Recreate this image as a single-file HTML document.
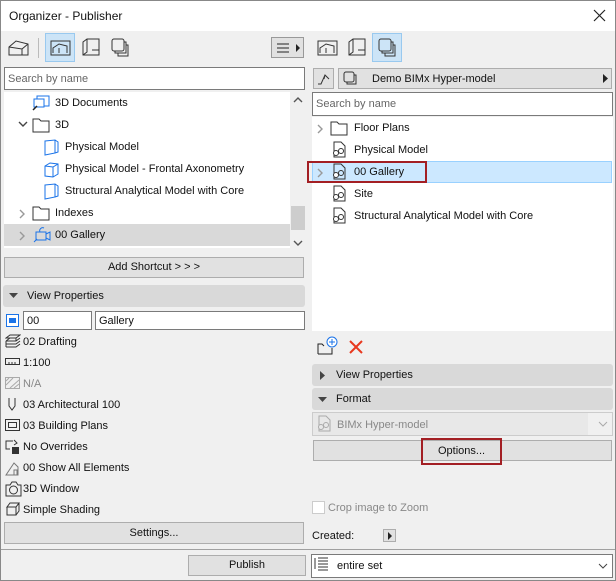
<!DOCTYPE html>
<html><head><style>
*{box-sizing:border-box;margin:0;padding:0}
body{width:616px;height:581px;background:#f0f0f0;font-family:"Liberation Sans",sans-serif;font-size:11px;color:#111;position:relative;overflow:hidden}
.a{position:absolute}
.win{left:0;top:0;width:616px;height:581px;border:1px solid #888}
.btn{position:absolute;background:#e1e1e1;border:1px solid #adadad;text-align:center;font-size:11px}
.inp{position:absolute;background:#fff;border:1px solid #7a7a7a}
.hdr{position:absolute;background:#d9d9d9;border-radius:3px;font-size:11px}
.t{position:absolute;white-space:nowrap}
.g{color:#888}
</style></head><body>
<div class="a win"></div>
<div class="a" style="left:1px;top:1px;width:614px;height:30px;background:#fff"></div>
<div class="t" style="left:9px;top:9px;font-size:12px">Organizer - Publisher</div>
<svg class="a" style="left:593px;top:9px" width="13" height="13"><path d="M1 1L12 12M12 1L1 12" stroke="#222" stroke-width="1.2"/></svg>

<!-- left toolbar -->
<svg class="a" style="left:8px;top:39px" width="22" height="18"><path d="M1 16V8L8 2L20 5V16ZM1 8L14 10L20 5M14 10V16" fill="none" stroke="#333"/></svg>
<div class="a" style="left:38px;top:38px;width:1px;height:20px;background:#bbb"></div>
<div class="a" style="left:45px;top:33px;width:30px;height:29px;background:#cce4f7;border:1px solid #99c9ef"></div>
<svg class="a" style="left:50px;top:39px" width="22" height="18"><rect x="1" y="2" width="19" height="14" fill="none" stroke="#333"/><path d="M3 14V9L9 5L17 7V14M9 14V9" fill="none" stroke="#333"/></svg>
<svg class="a" style="left:80px;top:38px" width="22" height="20"><path d="M3 17V4L7 1H19V17ZM3 17L7 14V1M12 12H19" fill="none" stroke="#333"/></svg>
<svg class="a" style="left:110px;top:38px" width="22" height="20"><rect x="2" y="1" width="12" height="12" rx="2" fill="none" stroke="#333"/><path d="M14 4H16V15H5V13M16 7H18V18H8V15" fill="none" stroke="#333"/></svg>
<div class="btn" style="left:271px;top:37px;width:33px;height:21px;background:#e1e1e1;border-color:#999"></div>
<svg class="a" style="left:276px;top:41px" width="26" height="14"><path d="M1 3H13M1 7H13M1 11H13" stroke="#222"/><path d="M20 3L24 7L20 11Z" fill="#222"/></svg>

<div class="inp" style="left:4px;top:67px;width:301px;height:23px"></div>
<div class="t g" style="left:8px;top:73px;color:#666">Search by name</div>

<div class="a" style="left:4px;top:92px;width:286px;height:156px;background:#fff"></div>
<div class="a" style="left:290px;top:92px;width:15px;height:156px;background:#f0f0f0"></div>
<div class="a" style="left:291px;top:206px;width:14px;height:24px;background:#cdcdcd"></div>
<svg class="a" style="left:293px;top:96px" width="10" height="8"><path d="M1 6L5 2L9 6" fill="none" stroke="#555" stroke-width="1.4"/></svg>
<svg class="a" style="left:293px;top:239px" width="10" height="8"><path d="M1 2L5 6L9 2" fill="none" stroke="#555" stroke-width="1.4"/></svg>
<div class="a" style="left:4px;top:224px;width:286px;height:22px;background:#d9d9d9"></div>

<svg class="a" style="left:31px;top:94px" width="20" height="18"><rect x="6" y="2" width="12" height="10" fill="none" stroke="#1a73e8"/><rect x="3" y="5" width="10" height="8" fill="#fff" stroke="#1a73e8"/><path d="M2 16L6 12" stroke="#222" stroke-width="1.5"/></svg>
<div class="t" style="left:55px;top:97px">3D Documents</div>
<svg class="a" style="left:18px;top:120px" width="10" height="8"><path d="M1 2L5 6L9 2" fill="none" stroke="#444" stroke-width="1.4"/></svg>
<svg class="a" style="left:32px;top:118px" width="18" height="15"><path d="M1 14V1H7L9 3H17V14Z" fill="none" stroke="#333"/></svg>
<div class="t" style="left:55px;top:119px">3D</div>
<svg class="a" style="left:43px;top:139px" width="17" height="17"><path d="M2 2L12 1V14L2 16ZM12 1L15 3V13L12 14" fill="none" stroke="#1a73e8"/></svg>
<div class="t" style="left:65px;top:141px">Physical Model</div>
<svg class="a" style="left:43px;top:161px" width="17" height="17"><path d="M2 5L7 2L15 3V13L10 16L2 15ZM2 5L10 6L15 3M10 6V16" fill="none" stroke="#1a73e8"/></svg>
<div class="t" style="left:65px;top:163px">Physical Model - Frontal Axonometry</div>
<svg class="a" style="left:43px;top:183px" width="17" height="17"><path d="M2 2L12 1V14L2 16ZM12 1L15 3V13L12 14" fill="none" stroke="#1a73e8"/></svg>
<div class="t" style="left:65px;top:185px">Structural Analytical Model with Core</div>
<svg class="a" style="left:18px;top:209px" width="8" height="10"><path d="M2 1L6 5L2 9" fill="none" stroke="#999" stroke-width="1.4"/></svg>
<svg class="a" style="left:32px;top:206px" width="18" height="15"><path d="M1 14V1H7L9 3H17V14Z" fill="none" stroke="#333"/></svg>
<div class="t" style="left:55px;top:207px">Indexes</div>
<svg class="a" style="left:18px;top:231px" width="8" height="10"><path d="M2 1L6 5L2 9" fill="none" stroke="#999" stroke-width="1.4"/></svg>
<svg class="a" style="left:32px;top:226px" width="20" height="18"><rect x="4" y="6" width="10" height="8" fill="none" stroke="#1a73e8"/><path d="M14 8L18 6V14L14 12M8 6A3 3 0 0 1 12 2" fill="none" stroke="#1a73e8"/><path d="M2 16L5 13" stroke="#1a73e8"/></svg>
<div class="t" style="left:55px;top:229px">00 Gallery</div>

<div class="btn" style="left:4px;top:257px;width:300px;height:21px;line-height:19px">Add Shortcut &gt; &gt; &gt;</div>
<div class="hdr" style="left:3px;top:285px;width:302px;height:22px"></div>
<svg class="a" style="left:9px;top:293px" width="9" height="6"><path d="M0 0H9L4.5 5Z" fill="#444"/></svg>
<div class="t" style="left:27px;top:290px">View Properties</div>

<svg class="a" style="left:6px;top:314px" width="13" height="13"><rect x="0.5" y="0.5" width="12" height="12" fill="#fff" stroke="#1a73e8"/><rect x="3" y="4" width="7" height="5" fill="#1a73e8"/></svg>
<div class="inp" style="left:23px;top:311px;width:69px;height:19px"></div>
<div class="t" style="left:27px;top:315px">00</div>
<div class="inp" style="left:95px;top:311px;width:210px;height:19px"></div>
<div class="t" style="left:99px;top:315px">Gallery</div>

<svg class="a" style="left:5px;top:334px" width="16" height="14"><path d="M1 4L5 1H15L11 4ZM1 7L5 4M11 4V7M1 7H11L15 4M1 10H11L15 7M1 13H11L15 10M1 7V13" fill="none" stroke="#333"/></svg>
<div class="t" style="left:23px;top:336px">02 Drafting</div>
<svg class="a" style="left:5px;top:357px" width="16" height="10"><rect x="0.5" y="1.5" width="14" height="6" fill="none" stroke="#333"/><path d="M4 5V7M7 5V7M10 5V7" stroke="#333"/></svg>
<div class="t" style="left:23px;top:357px">1:100</div>
<svg class="a" style="left:5px;top:377px" width="16" height="13"><rect x="0.5" y="0.5" width="14" height="11" fill="none" stroke="#aaa"/><path d="M1 8L8 1M5 11L14 3M9 11L14 7M1 4L4 1" stroke="#aaa"/></svg>
<div class="t g" style="left:23px;top:378px">N/A</div>
<svg class="a" style="left:7px;top:397px" width="10" height="15"><path d="M2 1V9L5 13L8 9V1" fill="none" stroke="#333"/></svg>
<div class="t" style="left:23px;top:399px">03 Architectural 100</div>
<svg class="a" style="left:5px;top:419px" width="16" height="13"><rect x="0.5" y="0.5" width="14" height="11" fill="none" stroke="#333"/><rect x="3.5" y="3.5" width="8" height="5" fill="none" stroke="#333"/></svg>
<div class="t" style="left:23px;top:420px">03 Building Plans</div>
<svg class="a" style="left:5px;top:439px" width="16" height="16"><path d="M8 2H1V10H5" fill="none" stroke="#333"/><path d="M9 1L12 4L9 6" fill="none" stroke="#333"/><rect x="7" y="8" width="7" height="7" fill="#333"/></svg>
<div class="t" style="left:23px;top:441px">No Overrides</div>
<svg class="a" style="left:5px;top:460px" width="18" height="16"><path d="M1 15L9 3L13 7V15ZM9 10H12V15H9Z" fill="none" stroke="#777"/></svg>
<div class="t" style="left:23px;top:462px">00 Show All Elements</div>
<svg class="a" style="left:5px;top:481px" width="17" height="16"><path d="M1 4H5L7 1H11L13 4H16V15H1Z" fill="none" stroke="#333"/><circle cx="8.5" cy="9" r="4" fill="none" stroke="#333"/></svg>
<div class="t" style="left:23px;top:483px">3D Window</div>
<svg class="a" style="left:6px;top:502px" width="15" height="15"><path d="M1 5L4 1H13L10 5ZM1 5V13H10V5M10 13L13 9V1" fill="none" stroke="#333"/></svg>
<div class="t" style="left:23px;top:504px">Simple Shading</div>

<div class="btn" style="left:4px;top:522px;width:300px;height:22px;line-height:20px">Settings...</div>
<div class="a" style="left:1px;top:549px;width:614px;height:1px;background:#a0a0a0"></div>
<div class="btn" style="left:188px;top:555px;width:118px;height:21px;line-height:19px">Publish</div>

<!-- right toolbar -->
<svg class="a" style="left:317px;top:39px" width="22" height="18"><rect x="1" y="2" width="19" height="14" fill="none" stroke="#333"/><path d="M3 14V9L9 5L17 7V14M9 14V9" fill="none" stroke="#333"/></svg>
<svg class="a" style="left:346px;top:38px" width="22" height="20"><path d="M3 17V4L7 1H19V17ZM3 17L7 14V1M12 12H19" fill="none" stroke="#333"/></svg>
<div class="a" style="left:372px;top:33px;width:30px;height:29px;background:#cce4f7;border:1px solid #99c9ef"></div>
<svg class="a" style="left:377px;top:38px" width="22" height="20"><rect x="2" y="1" width="12" height="12" rx="2" fill="none" stroke="#333"/><path d="M14 4H16V15H5V13M16 7H18V18H8V15" fill="none" stroke="#333"/></svg>

<div class="btn" style="left:313px;top:68px;width:21px;height:21px"></div>
<svg class="a" style="left:316px;top:71px" width="16" height="15"><path d="M2 13H5L9 4L13 8M9 4L8 8" fill="none" stroke="#333"/></svg>
<div class="btn" style="left:338px;top:68px;width:274px;height:21px"></div>
<svg class="a" style="left:343px;top:71px" width="16" height="16"><rect x="1" y="1" width="10" height="10" rx="2" fill="none" stroke="#333"/><path d="M11 4H13V13H4V11" fill="none" stroke="#333"/></svg>
<div class="t" style="left:372px;top:73px">Demo BIMx Hyper-model</div>
<svg class="a" style="left:603px;top:74px" width="6" height="9"><path d="M0 0L5 4.5L0 9Z" fill="#222"/></svg>

<div class="inp" style="left:312px;top:92px;width:301px;height:24px"></div>
<div class="t" style="left:316px;top:98px;color:#666">Search by name</div>
<div class="a" style="left:312px;top:117px;width:301px;height:214px;background:#fff"></div>
<div class="a" style="left:312px;top:161px;width:300px;height:22px;background:#cce8ff;border:1px solid #99d1ff"></div>

<svg class="a" style="left:316px;top:124px" width="8" height="10"><path d="M2 1L6 5L2 9" fill="none" stroke="#999" stroke-width="1.4"/></svg>
<svg class="a" style="left:330px;top:121px" width="18" height="15"><path d="M1 14V1H7L9 3H17V14Z" fill="none" stroke="#333"/></svg>
<div class="t" style="left:354px;top:122px">Floor Plans</div>
<svg class="a" style="left:331px;top:141px" width="16" height="18"><path d="M3 1H10L14 5V16H3Z" fill="none" stroke="#333"/><circle cx="5" cy="12" r="2.5" fill="#fff" stroke="#333"/><circle cx="10" cy="10" r="2.5" fill="none" stroke="#333"/></svg>
<div class="t" style="left:354px;top:144px">Physical Model</div>
<svg class="a" style="left:316px;top:168px" width="8" height="10"><path d="M2 1L6 5L2 9" fill="none" stroke="#999" stroke-width="1.4"/></svg>
<svg class="a" style="left:331px;top:163px" width="16" height="18"><path d="M3 1H10L14 5V16H3Z" fill="none" stroke="#333"/><circle cx="5" cy="12" r="2.5" fill="#fff" stroke="#333"/><circle cx="10" cy="10" r="2.5" fill="none" stroke="#333"/></svg>
<div class="t" style="left:354px;top:166px">00 Gallery</div>
<div class="a" style="left:307px;top:161px;width:120px;height:22px;border:2px solid #a31f24"></div>
<svg class="a" style="left:331px;top:185px" width="16" height="18"><path d="M3 1H10L14 5V16H3Z" fill="none" stroke="#333"/><circle cx="5" cy="12" r="2.5" fill="#fff" stroke="#333"/><circle cx="10" cy="10" r="2.5" fill="none" stroke="#333"/></svg>
<div class="t" style="left:354px;top:188px">Site</div>
<svg class="a" style="left:331px;top:207px" width="16" height="18"><path d="M3 1H10L14 5V16H3Z" fill="none" stroke="#333"/><circle cx="5" cy="12" r="2.5" fill="#fff" stroke="#333"/><circle cx="10" cy="10" r="2.5" fill="none" stroke="#333"/></svg>
<div class="t" style="left:354px;top:210px">Structural Analytical Model with Core</div>

<svg class="a" style="left:317px;top:336px" width="22" height="19"><path d="M1 18V8H5L7 10M1 18H15V12" fill="none" stroke="#222"/><circle cx="15" cy="6" r="5" fill="#fff" stroke="#1a73e8"/><path d="M15 3V9M12 6H18" stroke="#1a73e8"/></svg>
<svg class="a" style="left:349px;top:340px" width="14" height="14"><path d="M1 1L13 13M13 1L1 13" stroke="#e8381e" stroke-width="2"/></svg>

<div class="hdr" style="left:312px;top:364px;width:301px;height:22px"></div>
<svg class="a" style="left:320px;top:371px" width="6" height="9"><path d="M0 0L5 4.5L0 9Z" fill="#444"/></svg>
<div class="t" style="left:336px;top:369px">View Properties</div>
<div class="hdr" style="left:312px;top:388px;width:301px;height:22px"></div>
<svg class="a" style="left:318px;top:397px" width="9" height="6"><path d="M0 0H9L4.5 5Z" fill="#444"/></svg>
<div class="t" style="left:336px;top:393px">Format</div>

<div class="a" style="left:312px;top:412px;width:301px;height:24px;background:#f0f0f0;border:1px solid #ccc"></div>
<div class="a" style="left:313px;top:413px;width:275px;height:22px;background:#e8e8e8"></div>
<svg class="a" style="left:316px;top:415px" width="16" height="18"><path d="M3 1H10L14 5V16H3Z" fill="none" stroke="#aaa"/><circle cx="5" cy="12" r="2.5" fill="#e8e8e8" stroke="#aaa"/><circle cx="10" cy="10" r="2.5" fill="none" stroke="#aaa"/></svg>
<div class="t g" style="left:337px;top:419px">BIMx Hyper-model</div>
<svg class="a" style="left:598px;top:421px" width="10" height="7"><path d="M1 1L5 5L9 1" fill="none" stroke="#aaa"/></svg>

<div class="btn" style="left:313px;top:440px;width:299px;height:21px"></div>
<div class="t" style="left:438px;top:445px">Options...</div>
<div class="a" style="left:421px;top:438px;width:81px;height:27px;border:2px solid #a31f24"></div>

<div class="a" style="left:312px;top:501px;width:13px;height:13px;background:#fff;border:1px solid #ccc"></div>
<div class="t g" style="left:328px;top:502px">Crop image to Zoom</div>
<div class="t" style="left:312px;top:530px">Created:</div>
<div class="btn" style="left:383px;top:529px;width:13px;height:13px"></div>
<svg class="a" style="left:388px;top:532px" width="5" height="8"><path d="M0 0L4 4L0 8Z" fill="#222"/></svg>

<div class="inp" style="left:311px;top:554px;width:302px;height:24px"></div>
<svg class="a" style="left:314px;top:557px" width="16" height="14"><path d="M1 1V12M4 1H14M4 4H14M4 7H14M4 10H14M4 13H14" stroke="#333"/></svg>
<div class="t" style="left:337px;top:560px">entire set</div>
<svg class="a" style="left:598px;top:563px" width="10" height="7"><path d="M1 1L5 5L9 1" fill="none" stroke="#444"/></svg>
</body></html>
